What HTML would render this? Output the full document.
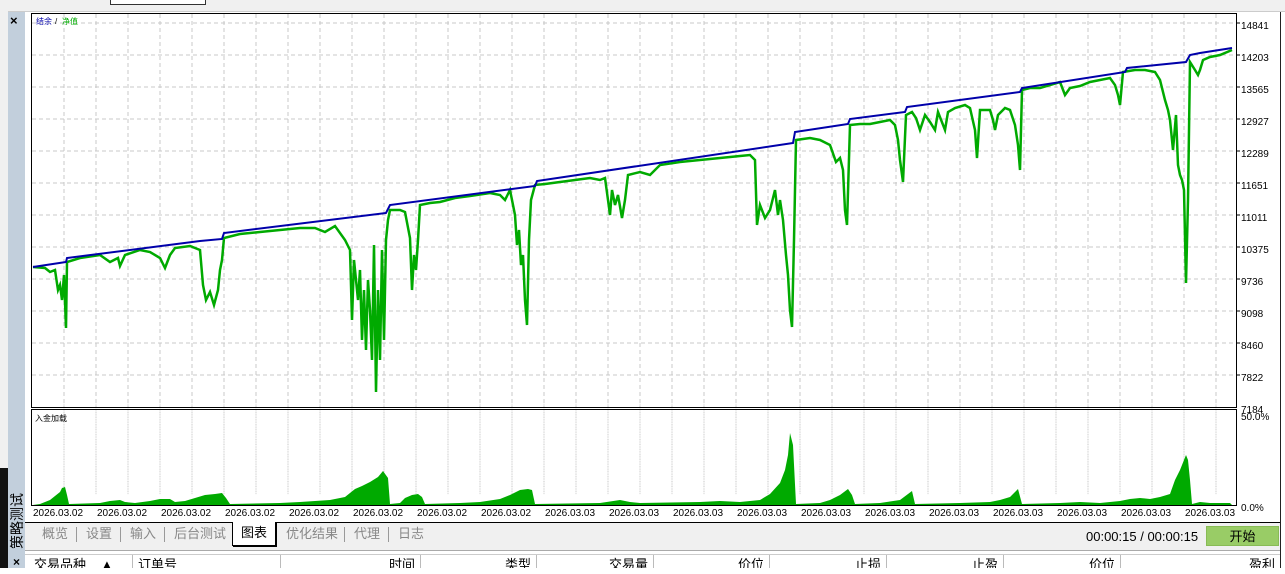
<!DOCTYPE html>
<html><head><meta charset="utf-8"><style>
*{margin:0;padding:0;box-sizing:border-box}
body{width:1285px;height:568px;overflow:hidden;background:#fff;position:relative;font-family:"Liberation Sans","Noto Sans CJK SC",sans-serif}
.abs{position:absolute}
.tab{position:absolute;top:523px;height:22px;font-size:13px;color:#888;line-height:22px}
.sep{position:absolute;top:527px;width:1px;height:15px;background:#999}
.th{position:absolute;top:555px;height:13px;font-size:13px;color:#000;line-height:20px;overflow:hidden;border-right:1px solid #bbb}
</style></head><body>
<div class="abs" style="left:0;top:0;width:1285px;height:12px;background:#f0f0f0;border-bottom:1px solid #ccc"></div>
<div class="abs" style="left:110px;top:0;width:96px;height:5px;border:1px solid #333;border-top:none;background:#fff"></div>
<div class="abs" style="left:0;top:0;width:8px;height:568px;background:#f0f0f0"></div>
<div class="abs" style="left:0;top:468px;width:8px;height:100px;background:#111"></div>
<div class="abs" style="left:8px;top:12px;width:17px;height:538px;background:#c2cfdc"></div>
<div class="abs" style="left:10px;top:13px;font-size:13px;font-weight:bold">×</div>
<div class="abs" style="left:6px;top:495px;width:20px;height:54px;"><div style="transform:rotate(-90deg);transform-origin:0 0;position:absolute;left:1px;top:54px;font-size:14px;white-space:nowrap;color:#000">策略测试</div></div>
<div class="abs" style="left:8px;top:550px;width:17px;height:18px;background:#c2cfdc;font-size:12px;font-weight:bold;text-align:center;line-height:24px">×</div>
<div class="abs" style="left:1280px;top:12px;width:5px;height:556px;background:#fff;border-left:1px solid #222"></div>

<svg class="abs" style="left:0;top:0" width="1285" height="520">
<g stroke="#c8c8c8" stroke-dasharray="4,3" stroke-width="1">
<g id="v">
<line x1="64" y1="14" x2="64" y2="407"/><line x1="96" y1="14" x2="96" y2="407"/><line x1="128" y1="14" x2="128" y2="407"/><line x1="160" y1="14" x2="160" y2="407"/><line x1="192" y1="14" x2="192" y2="407"/><line x1="224" y1="14" x2="224" y2="407"/><line x1="256" y1="14" x2="256" y2="407"/><line x1="288" y1="14" x2="288" y2="407"/><line x1="320" y1="14" x2="320" y2="407"/><line x1="352" y1="14" x2="352" y2="407"/><line x1="384" y1="14" x2="384" y2="407"/><line x1="416" y1="14" x2="416" y2="407"/><line x1="448" y1="14" x2="448" y2="407"/><line x1="480" y1="14" x2="480" y2="407"/><line x1="512" y1="14" x2="512" y2="407"/><line x1="544" y1="14" x2="544" y2="407"/><line x1="576" y1="14" x2="576" y2="407"/><line x1="608" y1="14" x2="608" y2="407"/><line x1="640" y1="14" x2="640" y2="407"/><line x1="672" y1="14" x2="672" y2="407"/><line x1="704" y1="14" x2="704" y2="407"/><line x1="736" y1="14" x2="736" y2="407"/><line x1="768" y1="14" x2="768" y2="407"/><line x1="800" y1="14" x2="800" y2="407"/><line x1="832" y1="14" x2="832" y2="407"/><line x1="864" y1="14" x2="864" y2="407"/><line x1="896" y1="14" x2="896" y2="407"/><line x1="928" y1="14" x2="928" y2="407"/><line x1="960" y1="14" x2="960" y2="407"/><line x1="992" y1="14" x2="992" y2="407"/><line x1="1024" y1="14" x2="1024" y2="407"/><line x1="1056" y1="14" x2="1056" y2="407"/><line x1="1088" y1="14" x2="1088" y2="407"/><line x1="1120" y1="14" x2="1120" y2="407"/><line x1="1152" y1="14" x2="1152" y2="407"/><line x1="1184" y1="14" x2="1184" y2="407"/><line x1="1216" y1="14" x2="1216" y2="407"/>
</g>
<use href="#v" transform="translate(0,397) scale(1,0.24)"/>
<line x1="32" y1="23" x2="1236" y2="23"/><line x1="32" y1="55" x2="1236" y2="55"/><line x1="32" y1="87" x2="1236" y2="87"/><line x1="32" y1="119" x2="1236" y2="119"/><line x1="32" y1="151" x2="1236" y2="151"/><line x1="32" y1="183" x2="1236" y2="183"/><line x1="32" y1="215" x2="1236" y2="215"/><line x1="32" y1="247" x2="1236" y2="247"/><line x1="32" y1="279" x2="1236" y2="279"/><line x1="32" y1="311" x2="1236" y2="311"/><line x1="32" y1="343" x2="1236" y2="343"/><line x1="32" y1="375" x2="1236" y2="375"/>
</g>
<rect x="31.5" y="13.5" width="1205" height="394" fill="none" stroke="#000"/>
<rect x="31.5" y="409.5" width="1205" height="96" fill="none" stroke="#000"/>
<polyline fill="none" stroke="#00aa00" stroke-width="2.5" points="33,267 45,268 50,272 55,270 58,290 60,285 62,300 64,275 66,328 67,262 80,258 100,255 110,262 118,258 120,266 125,255 140,250 150,252 160,258 165,268 170,255 175,248 190,246 200,250 203,285 206,300 210,292 214,305 218,290 220,270 222,260 224,238 240,234 260,232 280,230 300,228 315,228 325,232 335,226 345,240 350,250 352,320 354,260 356,280 358,300 360,270 362,340 364,290 366,350 368,280 370,310 372,360 374,245 376,392 378,290 380,360 382,250 384,340 386,240 388,220 390,210 400,210 405,212 410,238 412,290 414,255 416,270 418,240 420,205 430,203 440,202 455,198 470,196 490,193 500,195 505,200 510,190 515,215 517,245 519,230 521,265 523,255 525,300 527,325 529,240 531,200 535,185 545,184 560,182 575,180 590,178 600,180 605,178 608,200 610,215 612,190 615,205 618,195 622,218 625,200 628,175 640,172 650,175 660,165 680,162 700,160 720,158 740,156 750,155 755,160 757,225 760,205 765,218 770,210 775,190 778,215 780,200 783,220 786,255 788,275 790,310 792,327 794,240 796,140 810,138 820,140 830,145 836,162 840,158 843,170 845,210 847,225 850,125 860,124 870,124 880,122 890,120 895,125 898,140 900,160 903,182 906,115 912,112 916,118 920,130 925,115 930,122 935,130 938,112 945,130 948,112 955,108 965,105 970,108 975,130 977,158 980,110 990,110 993,120 995,130 998,115 1005,108 1010,110 1015,125 1018,145 1020,170 1022,90 1030,88 1040,88 1050,85 1060,82 1065,95 1070,88 1080,86 1090,82 1100,80 1110,78 1115,85 1118,95 1120,105 1123,72 1135,70 1145,70 1155,72 1160,80 1165,100 1168,110 1170,120 1173,150 1176,115 1178,165 1180,175 1182,180 1184,190 1186,283 1188,200 1190,62 1195,70 1198,75 1200,70 1203,60 1210,57 1220,55 1232,50"/>
<polyline fill="none" stroke="#0000aa" stroke-width="2" points="33,267 66,262 67,258 200,241 222,239 224,233 386,213 390,205 535,186 537,181 793,143 795,132 848,124 850,119 905,112 907,107 1020,92 1022,88 1125,72 1127,68 1186,62 1190,55 1200,53 1232,48"/>
<polygon fill="#00aa00" points="33,505 40,504 50,500 55,496 60,492 62,488 65,487 67,495 69,504 100,503 110,501 120,500 125,502 135,503 150,501 160,499 170,499 175,502 185,501 195,498 205,495 215,494 222,493 226,498 230,504 280,503 300,502 330,500 345,497 355,489 362,486 370,482 378,477 383,471 388,478 390,504 400,503 405,498 412,495 418,494 422,497 425,504 460,503 480,502 500,499 510,495 520,490 528,489 532,490 535,504 600,503 620,500 630,502 640,503 700,502 720,501 740,502 760,500 770,494 780,483 785,470 788,455 790,433 793,445 796,504 820,503 830,500 840,495 848,489 852,495 855,504 880,503 900,500 908,494 912,491 915,504 960,503 990,502 1000,500 1010,497 1018,489 1022,504 1060,503 1080,502 1100,503 1120,501 1130,499 1140,498 1150,499 1160,497 1170,494 1175,480 1180,470 1184,460 1186,455 1188,460 1190,480 1192,504 1200,502 1210,503 1230,503 1232,505"/>
<g font-size="10" fill="#000" font-family="Liberation Sans,sans-serif">
<text x="1241" y="29">14841</text><text x="1241" y="61">14203</text><text x="1241" y="93">13565</text><text x="1241" y="125">12927</text><text x="1241" y="157">12289</text><text x="1241" y="189">11651</text><text x="1241" y="221">11011</text><text x="1241" y="253">10375</text><text x="1241" y="285">9736</text><text x="1241" y="317">9098</text><text x="1241" y="349">8460</text><text x="1241" y="381">7822</text><text x="1241" y="413">7184</text>
<text x="1241" y="420">50.0%</text><text x="1241" y="511">0.0%</text>
</g>
<g stroke="#000"><line x1="1237" y1="23" x2="1240" y2="23"/><line x1="1237" y1="55" x2="1240" y2="55"/><line x1="1237" y1="87" x2="1240" y2="87"/><line x1="1237" y1="119" x2="1240" y2="119"/><line x1="1237" y1="151" x2="1240" y2="151"/><line x1="1237" y1="183" x2="1240" y2="183"/><line x1="1237" y1="215" x2="1240" y2="215"/><line x1="1237" y1="247" x2="1240" y2="247"/><line x1="1237" y1="279" x2="1240" y2="279"/><line x1="1237" y1="311" x2="1240" y2="311"/><line x1="1237" y1="343" x2="1240" y2="343"/><line x1="1237" y1="375" x2="1240" y2="375"/></g>
<text x="36" y="24" font-size="8" fill="#0000aa" font-family="Noto Sans CJK SC,sans-serif">结余</text><text x="55" y="24" font-size="8" fill="#000">/</text><text x="62" y="24" font-size="8" fill="#00aa00" font-family="Noto Sans CJK SC,sans-serif">净值</text>
<text x="35" y="421" font-size="8" fill="#000" font-family="Noto Sans CJK SC,sans-serif">入金加载</text>
<g font-size="10" fill="#000" font-family="Liberation Sans,sans-serif">
<text x="33" y="516">2026.03.02</text><text x="97" y="516">2026.03.02</text><text x="161" y="516">2026.03.02</text><text x="225" y="516">2026.03.02</text><text x="289" y="516">2026.03.02</text><text x="353" y="516">2026.03.02</text><text x="417" y="516">2026.03.02</text><text x="481" y="516">2026.03.02</text><text x="545" y="516">2026.03.03</text><text x="609" y="516">2026.03.03</text><text x="673" y="516">2026.03.03</text><text x="737" y="516">2026.03.03</text><text x="801" y="516">2026.03.03</text><text x="865" y="516">2026.03.03</text><text x="929" y="516">2026.03.03</text><text x="993" y="516">2026.03.03</text><text x="1057" y="516">2026.03.03</text><text x="1121" y="516">2026.03.03</text><text x="1185" y="516">2026.03.03</text>
</g>
</svg>

<div class="abs" style="left:25px;top:522px;width:1255px;height:28px;background:#f0f0f0;border-top:1px solid #000"></div>
<div class="tab" style="left:42px">概览</div><div class="sep" style="left:76px"></div>
<div class="tab" style="left:86px">设置</div><div class="sep" style="left:120px"></div>
<div class="tab" style="left:130px">输入</div><div class="sep" style="left:164px"></div>
<div class="tab" style="left:174px">后台测试</div>
<div class="abs" style="left:232px;top:522px;width:44px;height:24px;background:#fff;border:1px solid #000;border-top:none;box-shadow:1px 1px 0 #000;font-size:13px;line-height:22px;text-align:center;color:#000">图表</div>
<div class="tab" style="left:286px">优化结果</div><div class="sep" style="left:344px"></div>
<div class="tab" style="left:354px">代理</div><div class="sep" style="left:388px"></div>
<div class="tab" style="left:398px">日志</div>
<div class="abs" style="left:1086px;top:529px;font-size:13px;color:#000">00:00:15 / 00:00:15</div>
<div class="abs" style="left:1206px;top:526px;width:73px;height:20px;background:#99cc66;border:1px solid #88bb55;font-size:13px;text-align:center;line-height:19px">开始</div>
<div class="abs" style="left:25px;top:550px;width:1255px;height:1px;background:#aaa"></div>
<div class="abs" style="left:25px;top:554px;width:1255px;height:1px;background:#ccc"></div>
<div class="th" style="left:26px;width:107px;padding-left:8px">交易品种 &nbsp;&nbsp;&nbsp;▲</div>
<div class="th" style="left:133px;width:148px;padding-left:5px">订单号</div>
<div class="th" style="left:281px;width:140px;text-align:right;padding-right:5px">时间</div>
<div class="th" style="left:421px;width:116px;text-align:right;padding-right:5px">类型</div>
<div class="th" style="left:537px;width:117px;text-align:right;padding-right:5px">交易量</div>
<div class="th" style="left:654px;width:116px;text-align:right;padding-right:5px">价位</div>
<div class="th" style="left:770px;width:117px;text-align:right;padding-right:5px">止损</div>
<div class="th" style="left:887px;width:117px;text-align:right;padding-right:5px">止盈</div>
<div class="th" style="left:1004px;width:117px;text-align:right;padding-right:5px">价位</div>
<div class="th" style="left:1121px;width:159px;text-align:right;padding-right:5px;border-right:none">盈利</div>
</body></html>
